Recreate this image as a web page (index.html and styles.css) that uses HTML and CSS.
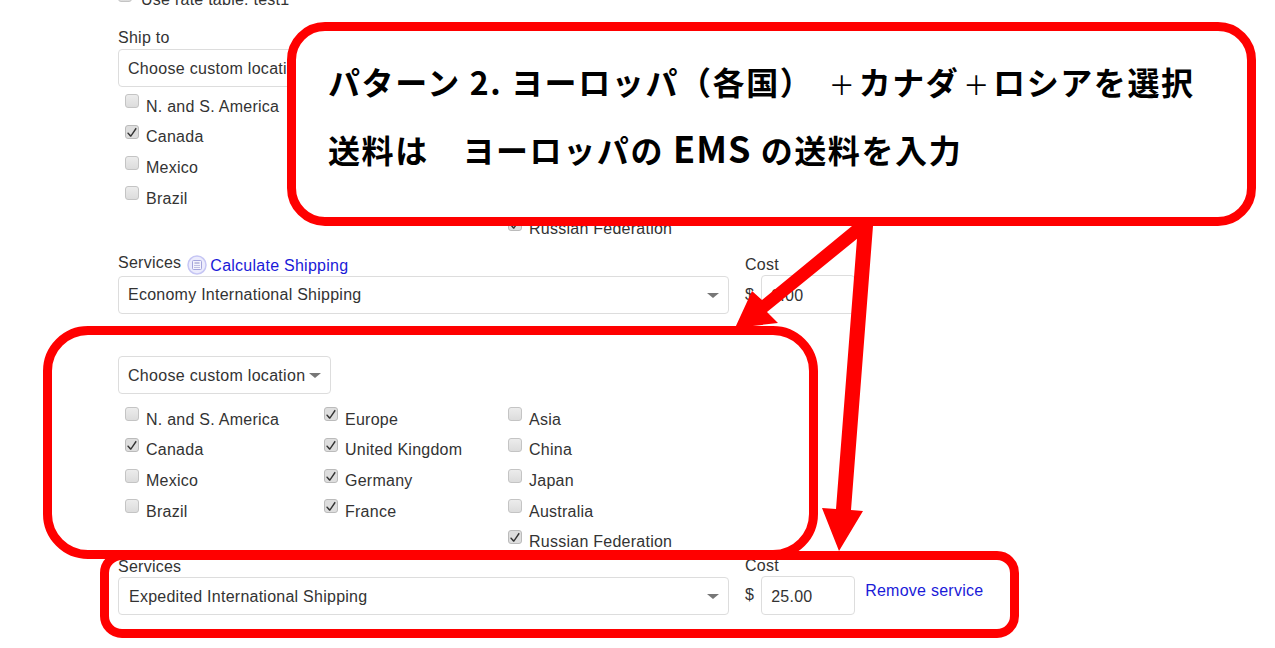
FILE: index.html
```html
<!DOCTYPE html>
<html lang="ja">
<head>
    <meta charset="UTF-8">
    <meta name="viewport" content="width=device-width, initial-scale=1.0">
    <title>Shipping services</title>
    <link rel="stylesheet" href="styles.css">
</head>
<body>
    <svg class="defs" width="0" height="0">
        <symbol id="tick" viewBox="0 0 14 14">
            <path d="M3 7.2 L5.8 10 L10.6 2.8 L11.8 3.8 L6.2 11.8 L5.2 11.8 L2.2 8.2 Z" fill="#333"/>
        </symbol>
    </svg>

    <form class="form">
        <label class="rate-row"><span class="box"></span>Use rate table: test1</label>

        <div class="field-label ship-label">Ship to</div>
        <div class="dropdown">Choose custom location<span class="caret"></span></div>
        <div class="regions">
            <label class="region"><span class="box"></span>N. and S. America</label>
            <label class="region"><span class="box on"><svg><use href="#tick"/></svg></span>Europe</label>
            <label class="region"><span class="box"></span>Asia</label>
            <label class="region"><span class="box on"><svg><use href="#tick"/></svg></span>Canada</label>
            <label class="region"><span class="box on"><svg><use href="#tick"/></svg></span>United Kingdom</label>
            <label class="region"><span class="box"></span>China</label>
            <label class="region"><span class="box"></span>Mexico</label>
            <label class="region"><span class="box on"><svg><use href="#tick"/></svg></span>Germany</label>
            <label class="region"><span class="box"></span>Japan</label>
            <label class="region"><span class="box"></span>Brazil</label>
            <label class="region"><span class="box on"><svg><use href="#tick"/></svg></span>France</label>
            <label class="region"><span class="box"></span>Australia</label>
            <label class="region col-3"><span class="box on"><svg><use href="#tick"/></svg></span>Russian Federation</label>
        </div>

        <div class="service service-first">
            <div class="service-main">
                <div class="service-head">
                    <span class="field-label">Services</span>
                    <svg class="calc-icon" width="20" height="20" viewBox="0 0 20 20">
                        <circle cx="10" cy="10" r="9" fill="#ececfd" stroke="#c6c6f4" stroke-width="1.5"/>
                        <rect x="5.5" y="5.5" width="9" height="9" rx="1" fill="#f4f4fd" stroke="#a4a4dc"/>
                        <path d="M7.5 8h5M7.5 10.5h1M9.5 10.5h1M11.5 10.5h1M7.5 12.5h1M9.5 12.5h1M11.5 12.5h1" stroke="#8c8cc8"/>
                    </svg>
                    <a class="link calc-link" href="#">Calculate Shipping</a>
                </div>
                <div class="select">Economy International Shipping<span class="caret"></span></div>
            </div>
            <div class="cost">
                <div class="field-label">Cost</div>
                <div class="cost-row"><span>$</span><span class="cost-input">0.00</span></div>
            </div>
        </div>

        <div class="dropdown dropdown-second">Choose custom location<span class="caret"></span></div>
        <div class="regions regions-second">
            <label class="region"><span class="box"></span>N. and S. America</label>
            <label class="region"><span class="box on"><svg><use href="#tick"/></svg></span>Europe</label>
            <label class="region"><span class="box"></span>Asia</label>
            <label class="region"><span class="box on"><svg><use href="#tick"/></svg></span>Canada</label>
            <label class="region"><span class="box on"><svg><use href="#tick"/></svg></span>United Kingdom</label>
            <label class="region"><span class="box"></span>China</label>
            <label class="region"><span class="box"></span>Mexico</label>
            <label class="region"><span class="box on"><svg><use href="#tick"/></svg></span>Germany</label>
            <label class="region"><span class="box"></span>Japan</label>
            <label class="region"><span class="box"></span>Brazil</label>
            <label class="region"><span class="box on"><svg><use href="#tick"/></svg></span>France</label>
            <label class="region"><span class="box"></span>Australia</label>
            <label class="region col-3"><span class="box on"><svg><use href="#tick"/></svg></span>Russian Federation</label>
        </div>

        <div class="service service-second">
            <div class="service-main">
                <div class="service-head">
                    <span class="field-label">Services</span>
                </div>
                <div class="select select-second">Expedited International Shipping<span class="caret"></span></div>
            </div>
            <div class="cost">
                <div class="field-label">Cost</div>
                <div class="cost-row"><span>$</span><span class="cost-input">25.00</span><a class="link remove" href="#">Remove service</a></div>
            </div>
        </div>
    </form>

    <!-- annotations drawn over the screenshot -->
    <div class="callout">
        <p>パターン 2. ヨーロッパ（各国）　<span class="plus plus-first">＋</span>カナダ<span class="plus">＋</span>ロシアを選択</p>
        <p>送料は　ヨーロッパの <span class="latin">EMS</span> の送料を入力</p>
    </div>
    <div class="frame frame-locations"></div>
    <div class="frame frame-service"></div>
    <svg class="arrows" width="1275" height="648" viewBox="0 0 1275 648">
        <polygon points="852,226 868,226 858,238 767,312 778,323 735,328 752,291 762,300" fill="#f00"/>
        <polygon points="858,226 873,226 851,510 863,511 839,551 822,508 836,509" fill="#f00"/>
    </svg>
</body>
</html>
```

FILE: styles.css
```css
html, body {
    margin: 0;
    padding: 0;
    height: 648px;
    overflow: hidden;
    background-color: #fff;
}

body {
    position: relative;
    font-family: "Liberation Sans", Arial, sans-serif;
    font-size: 16px;
    letter-spacing: 0.25px;
    color: #333;
}

.defs {
    position: absolute;
}

.form {
    margin-top: -12px;
    padding-left: 118px;
}

.rate-row {
    display: flex;
    align-items: center;
    height: 24px;
    gap: 2px;
}

.field-label {
    line-height: 20px;
}

.ship-label {
    margin-top: 16px;
}

.dropdown {
    display: inline-flex;
    align-items: center;
    box-sizing: border-box;
    height: 38px;
    margin-top: 1px;
    padding: 1px 9px 0 9px;
    background-color: #fff;
    border: 1px solid #ddd;
    border-radius: 4px;
    letter-spacing: 0.3px;
    vertical-align: top;
}

.dropdown-second {
    margin-top: 42px;
}

.caret {
    width: 0;
    height: 0;
    margin-left: 4px;
    border-top: 5px solid #777;
    border-left: 6px solid transparent;
    border-right: 6px solid transparent;
}

.regions {
    display: grid;
    grid-template-columns: 199px 184px 1fr;
    grid-auto-rows: 30.67px;
    margin-top: 4.4px;
    padding-left: 7px;
}

.regions-second {
    margin-top: 10px;
}

.region {
    display: flex;
    align-items: center;
    white-space: nowrap;
}

.col-3 {
    grid-column: 3;
}

.box {
    flex: none;
    box-sizing: border-box;
    width: 14px;
    height: 14px;
    margin: -11px 7px 0 0;
    background: linear-gradient(#ececec, #dcdcdc);
    border: 1px solid #c4c4c4;
    border-radius: 3px;
}

.box.on {
    background: #dedede;
    border-color: #bbb;
}

.box svg {
    display: block;
    width: 14px;
    height: 14px;
    margin: -1px;
}

.service {
    display: flex;
}

.service-first {
    margin-top: 7.77px;
}

.service-second {
    margin-top: -1px;
}

.service-main {
    width: 611px;
}

.service-head {
    display: flex;
    align-items: flex-start;
}

.service-first .service-head {
    height: 24px;
}

.service-first .service-head .field-label {
    margin-top: 1px;
}

.service-second .service-head {
    height: 20px;
}

.calc-icon {
    margin: 3px 3px 0 6px;
}

.calc-link {
    margin-top: 5px;
}

.select {
    display: flex;
    align-items: center;
    justify-content: space-between;
    box-sizing: border-box;
    height: 38px;
    padding: 0 9px;
    background-color: #fff;
    border: 1px solid #ddd;
    border-radius: 4px;
}

.select-second {
    padding: 2px 9px 0 10px;
}

.cost {
    margin-left: 16px;
}

.service-first .cost {
    margin-top: 3px;
}

.service-second .cost {
    margin-top: -1px;
}

.cost-row {
    display: flex;
    align-items: center;
    gap: 7px;
}

.cost-input {
    box-sizing: border-box;
    width: 94px;
    height: 39px;
    padding: 0 9px;
    line-height: 39px;
    background-color: #fff;
    border: 1px solid #ddd;
    border-radius: 4px;
}

.link {
    color: #1a1ad8;
    text-decoration: none;
}

.remove {
    margin: -9px 0 0 3px;
    white-space: nowrap;
}

/* annotations */
.callout {
    position: absolute;
    left: 287px;
    top: 22px;
    box-sizing: border-box;
    width: 969px;
    height: 204px;
    padding: 16px 0 0 32px;
    background-color: #fff;
    border: 9px solid #f00;
    border-radius: 38px;
    font-family: "Noto Sans CJK JP", sans-serif;
    font-size: 32px;
    font-weight: 700;
    letter-spacing: 1.6px;
    color: #000;
}

.callout p {
    margin: 0;
    line-height: 68px;
}

.plus {
    padding: 0 3.8px;
    font-size: 26px;
    font-weight: 400;
    line-height: 0;
    letter-spacing: 0;
}

.plus-first {
    margin-left: -6px;
}

.latin {
    font-size: 36px;
    line-height: 0;
    letter-spacing: 1.2px;
}

.frame {
    position: absolute;
    box-sizing: border-box;
    border: 9px solid #f00;
}

.frame-locations {
    left: 43px;
    top: 326px;
    width: 775px;
    height: 233px;
    border-radius: 45px;
}

.frame-service {
    left: 100px;
    top: 551px;
    width: 919px;
    height: 87px;
    border-radius: 22px;
}

.arrows {
    position: absolute;
    left: 0;
    top: 0;
}
```
